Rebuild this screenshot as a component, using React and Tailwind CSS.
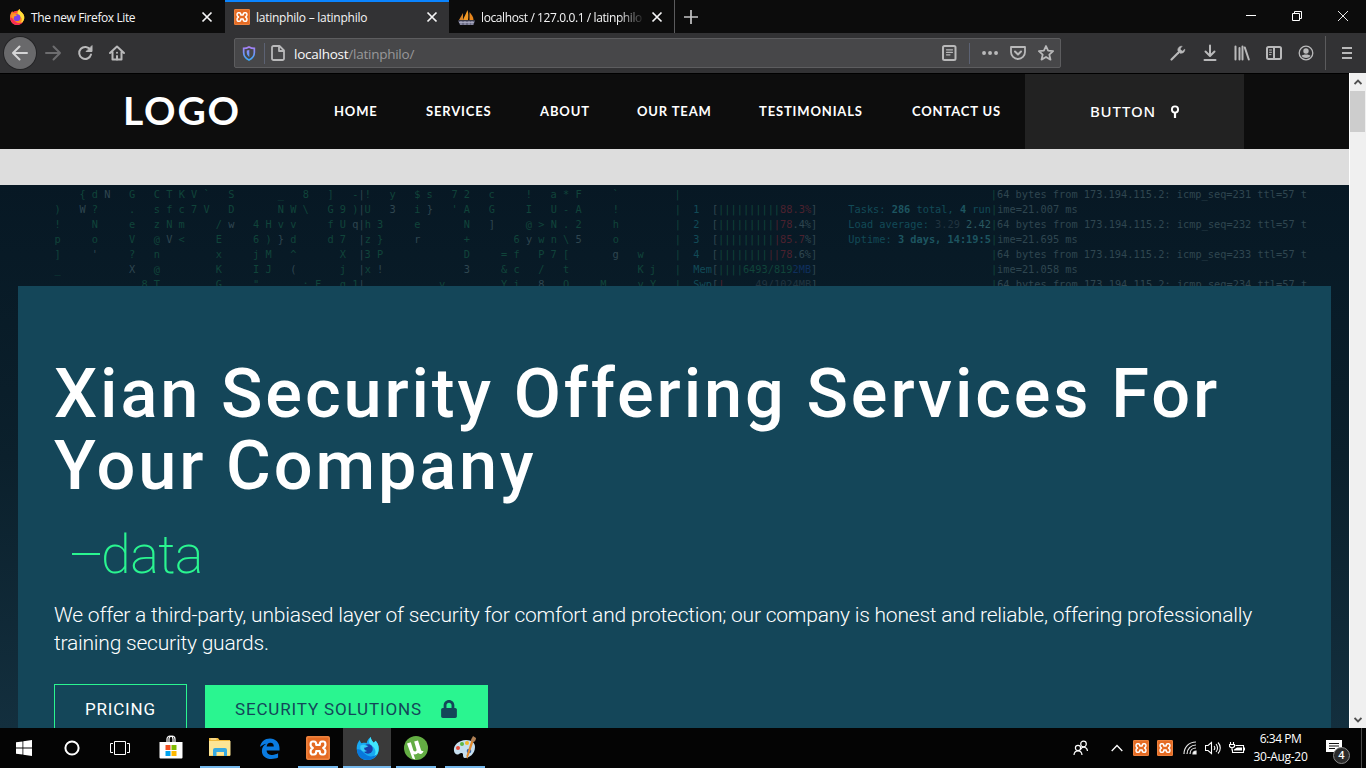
import React from 'react';
import { FaLock } from 'react-icons/fa';

const G = 'text-[#10443a]';
const W = 'text-[#2f4650]';
const C = 'text-[#124a57]';
const B = 'text-[#1d5560] font-bold';
const R = 'text-[#4c212e]';

const PING = (n) => `64 bytes from 173.194.115.2: icmp_seq=${n} ttl=57 t`;

// Each row lists [column, text, colour] runs on a fixed character grid.
const ROWS = [
  [[4, '{ d', G], [8, 'N', W], [12, 'G   C T K V `   S', G], [36, '_   8   ]   -', G], [49, '|', W], [50, '!   y   $ s   7 2   c', G], [76, '!   a * F     `', G], [100, '|', G], [151, '|', G], [152, PING(231), W]],
  [[0, ')', G], [4, 'W', W], [6, '?', G], [12, '.   s f c 7 V   D', G], [36, 'N W \\   G 9 )', G], [49, '|', W], [50, 'U', G], [54, '3', W], [58, 'i', G], [60, '}', W], [64, "' A   G", G], [76, 'I   U - A     !', G], [100, '|', G], [103, '1', C], [106, '[', W], [107, '||||||||||', G], [117, '88.3%', R], [122, ']', W], [128, 'Tasks: ', C], [135, '286', B], [139, 'total, ', C], [146, '4', B], [148, 'run', C], [151, '|', G], [152, 'ime=21.007 ms', W]],
  [[0, '!', G], [6, 'N', G], [12, 'e   z N m     /', G], [28, 'w', W], [32, '4 H v v     f U', G], [48, 'q|', W], [50, 'h 3', G], [58, 'e       N', G], [70, ']', W], [76, '@ > N . 2     h', G], [100, '|', G], [103, '2', C], [106, '[', W], [107, '|||||||||', G], [116, '|78', R], [119, '.4%]', W], [128, 'Load average: ', C], [142, '3.29', 'text-[#20333f]'], [147, '2.42', 'text-[#2b5961]'], [151, '|', G], [152, PING(232), W]],
  [[0, 'p', G], [6, 'o', G], [12, 'V   @', G], [18, 'V', W], [20, '<     E', G], [32, '6 )', G], [36, '}', W], [38, 'd     d 7', G], [49, '|', W], [50, 'z }', G], [58, 'r', W], [66, '+', G], [74, '6', G], [76, 'y', W], [78, 'w n \\', G], [84, '5', W], [90, 'o', G], [100, '|', G], [103, '3', C], [106, '[', W], [107, '|||||||||', G], [116, '|85.7', R], [121, '%]', W], [128, 'Uptime: ', C], [136, '3 days, 14:19:5', B], [151, '|', G], [152, 'ime=21.695 ms', W]],
  [[0, ']', G], [6, "'", W], [12, '?   n', G], [26, 'x     j M   ^', G], [46, 'X', G], [49, '|', W], [50, '3 P', G], [66, 'D     = f   P 7 [', G], [90, 'g', W], [94, 'w', G], [100, '|', G], [103, '4', C], [106, '[', W], [107, '||||||||', G], [115, '||78', R], [119, '.6%]', W], [151, '|', G], [152, PING(233), W]],
  [[0, '_', G], [12, 'X', W], [16, '@', G], [26, 'K     I J', G], [38, '(', W], [46, 'j', G], [49, '|', W], [50, 'x', G], [52, '!', W], [66, '3', W], [72, '& c   /   t', G], [94, 'K j', G], [100, '|', G], [103, 'Mem', C], [106, '[', W], [107, '||||6493/819', G], [119, '2MB', 'text-[#0f2f5c]'], [122, ']', W], [151, '|', G], [152, 'ime=21.058 ms', W]],
  [[0, '.', G], [14, '8 T', G], [26, 'G     "', G], [40, ': F', G], [46, 'q 1', G], [49, '|', W], [62, 'y', G], [72, 'Y i', G], [78, '8', W], [82, 'Q     M', G], [94, 'y Y', G], [100, '|', G], [103, 'Swp', C], [106, '[', W], [107, '|', R], [113, '49/1024MB', 'text-[#20333f]'], [122, ']', W], [151, '|', G], [152, PING(234), W]],
];

function Row({ runs }) {
  let at = 0;
  return (
    <div>
      {runs.map(([col, text, cls], i) => {
        const pad = ' '.repeat(col - at);
        at = col + text.length;
        return <span key={i} className={cls}>{pad}{text}</span>;
      })}
    </div>
  );
}

function Xampp({ className }) {
  return (
    <svg viewBox="0 0 24 24" className={className}>
      <rect width="24" height="24" rx="2" fill="#e56a22" />
      <rect x=".9" y=".9" width="22.200" height="22.200" rx="1" fill="none" stroke="#f39a5c" strokeWidth=".8" />
      <path d="M8 5.500H6.500C4.300 5.500 4.300 9 5 10.200c.3.700 1 1.200 1.800 1.800-.8.600-1.500 1.100-1.800 1.800-.7 1.200-.7 4.700 1.500 4.700H8c1.800 0 2.300-1.500 2.300-3.500h3.400c0 2 .5 3.500 2.300 3.500h1.500c2.200 0 2.200-3.500 1.500-4.700-.3-.7-1-1.200-1.800-1.800.8-.6 1.500-1.100 1.800-1.800.7-1.200.7-4.700-1.500-4.700H16c-1.800 0-2.300 1.500-2.300 3.500h-3.400c0-2-.5-3.500-2.300-3.500z" fill="none" stroke="#fff" strokeWidth="2.200" strokeLinejoin="round" />
    </svg>
  );
}

function Firefox({ className }) {
  return (
    <svg viewBox="0 0 24 24" className={className}>
      <circle cx="12" cy="13" r="10.500" fill="#ff453f" />
      <path d="M2 14C1 9 3 5 5 3c.3 1.700 1 2.800 2 3.500C8 6 9.500 6 11 6.500 12 3 14 1 16 0c0 3 2 4 4 6 3 3 4 7 2 11-2 4.500-6 7-10 7C7 24 3 21 2 14z" fill="#ff8a1f" />
      <path d="M16 0c0 3 2 4 4 6 3 3 4 8 1.500 12-1 2-3 3.500-5 4 3-3 4-7 1-10-2-2-4-3-4.500-5.500C13.300 3.500 14.500 1.200 16 0z" fill="#ffdf3a" />
      <path d="M2 13c0 7 5 11 10 11 4 0 7-1.500 9-5-3 2-8 3-11 0C6 17 5 12 2 13z" fill="#f72d55" />
      <circle cx="12" cy="13" r="5" fill="#7a42e8" />
      <path d="M5 9c3-2 5-.5 7 .5-1 .8-2 1.500-4 1.500 0 2-1 2-1 3C5 13 4 11 5 9z" fill="#ff9b28" />
    </svg>
  );
}

function FirefoxBlue({ className }) {
  return (
    <svg viewBox="0 0 24 24" className={className}>
      <path d="M1 14C0 9 2 5 4 3c.3 1.700 1 2.800 2 3.500C8 6 9.500 6 11 6.500 12 3 13.500 1 15.500 0c0 3 1.500 4 3 6l2-2c3 3 4 8 2.500 13-2 4.500-6 7-11 7C6 24 2 20 1 14z" fill="#18a9f2" />
      <path d="M15.500 0c0 3 1.500 4 3 6l2-2c3 3 4 8 2.500 12-1 3-3 4.500-5 5 3-3 3-7 .5-10-2-2-4.500-3-5-5.500.2-2.500.8-4.400 2-5.500z" fill="#40e4fb" />
      <path d="M1 13c0 7 5 11 11 11 4 0 8-2 10-6-4 3-9 3-12 0C7 16 5 12 1 13z" fill="#0878dc" />
      <circle cx="12.500" cy="12.500" r="5" fill="#1a3fa8" />
      <path d="M4.500 9c3-2 6-.5 8.500.5-1 .8-2 1.700-4.500 1.700 0 2 1 3 3 3.300-3 2-6 0-7-2.500z" fill="#38cdf7" />
    </svg>
  );
}

function Sailboat() {
  return (
    <svg viewBox="0 0 17 17" className="size-[17px]">
      <path d="M1 11L5 4v7z" fill="#d98427" />
      <path d="M5 11C6 8 8 5 9.500 1c1 3 1 7 .5 10z" fill="#f39a24" />
      <path d="M11.500 11V3c2 2.500 4 5 4 8z" fill="#e8861c" />
      <path d="M0 11.500h17l-1.500 4.500H2z" fill="#6b6c85" />
      <path d="M1 13.500h15M3 12v4M7 12v4M11 12v4M14 12v4" stroke="#b0b1c8" strokeWidth=".8" />
    </svg>
  );
}

function Close() {
  return (
    <svg viewBox="0 0 12 12" className="size-3 shrink-0">
      <path d="M1.500 1.500l9 9m0-9l-9 9" stroke="#f5f5f6" strokeWidth="1.700" />
    </svg>
  );
}

function Ico({ children, className = 'w-8' }) {
  return (
    <div className={`flex h-full shrink-0 items-center justify-center ${className}`}>
      <svg viewBox="0 0 16 16" className="size-4 overflow-visible" fill="none" stroke="#b9b9ba" strokeWidth="2" strokeLinecap="round" strokeLinejoin="round">
        {children}
      </svg>
    </div>
  );
}

function Tabs() {
  return (
    <div className="flex h-[33px] shrink-0 bg-[#0c0c0c] text-[12px] text-[#f5f5f6]">
      <div className="flex w-[225px] items-center pt-px pr-3 pl-[9px]">
        <Firefox className="size-4" />
        <span className="mt-px ml-[6px] grow whitespace-nowrap tracking-[-0.4px]">The new Firefox Lite</span>
        <Close />
      </div>
      <div className="flex w-[224px] items-center border-t-2 border-[#0a84ff] bg-[#323234] pr-[11px] pb-px pl-[9px]">
        <Xampp className="size-4" />
        <span className="mt-px ml-[6px] grow whitespace-nowrap tracking-[-0.25px]">latinphilo – latinphilo</span>
        <Close />
      </div>
      <div className="flex w-[226px] items-center border-r border-[#5b5b5d] pt-px pr-[11px] pl-[9px]">
        <Sailboat />
        <span className="mt-px ml-[6px] w-[164px] overflow-hidden whitespace-nowrap tracking-[-0.4px] [mask-image:linear-gradient(to_right,black_84%,transparent)]">localhost / 127.0.0.1 / latinphilo</span>
        <div className="ml-[6px]"><Close /></div>
      </div>
      <div className="flex w-8 items-center justify-center">
        <svg viewBox="0 0 14 14" className="size-[14px]"><path d="M7 0v14M0 7h14" stroke="#c5c5c6" strokeWidth="1.700" /></svg>
      </div>
      <div className="ml-auto flex items-center">
        <svg viewBox="0 0 46 33" className="w-[46px]"><path d="M18 15.500h10" stroke="#fff" /></svg>
        <svg viewBox="0 0 46 33" className="w-[46px]" fill="none" stroke="#fff"><path d="M18.500 13.500h7v7h-7zM20.500 13.500v-2h7v7h-2" /></svg>
        <svg viewBox="0 0 46 33" className="w-[46px]"><path d="M18 11l10 10m0-10l-10 10" stroke="#fff" strokeWidth=".9" /></svg>
      </div>
    </div>
  );
}

function Toolbar() {
  return (
    <div className="flex h-10 shrink-0 items-center bg-[#323234] pl-[4px]">
      <div className="flex size-8 items-center justify-center rounded-full bg-[#69696b] ring-1 ring-[#242426]">
        <svg viewBox="0 0 16 16" className="size-4" fill="none" stroke="#d5d5d6" strokeWidth="2" strokeLinecap="round" strokeLinejoin="round"><path d="M15 8H1m6.500-6.500L1 8l6.500 6.500" /></svg>
      </div>
      <Ico className="ml-px w-8"><path d="M1 8h14M8.500 1.500L15 8l-6.500 6.500" stroke="#6d6d6f" /></Ico>
      <Ico><path d="M13.300 4.800A6 6 0 1 0 14 9.500" /><path d="M15 1v5.500H9.500z" fill="#b9b9ba" strokeWidth="1" /></Ico>
      <Ico><path d="M1 8l7-6.500L15 8M3.500 7v7.500h9V7" /><path d="M8 14.500V11" /><path d="M8 7.700v.1" /></Ico>
      <div className="ml-[101px] flex h-[30px] w-[827px] items-center rounded-[2px] border border-[#5d5d5f] bg-[#474749]">
        <div className="flex w-[28px] justify-center">
          <svg viewBox="0 0 14 16" className="h-[15px] w-[14px]" fill="none">
            <defs><linearGradient id="sh" x1="0" y1="0" x2="0" y2="16" gradientUnits="userSpaceOnUse"><stop stopColor="#b07df5" /><stop offset="1" stopColor="#35acf8" /></linearGradient></defs>
            <path d="M7 1c2 1.200 4 1.500 5.700 1.500v4.500c0 4-2.500 6.500-5.700 8-3.200-1.500-5.700-4-5.700-8V2.500C3 2.500 5 2.200 7 1z" stroke="url(#sh)" strokeWidth="1.800" />
            <path d="M7.300 4.200v7.500c-1.700-1.200-2.700-2.900-2.700-4.700V4.700z" fill="url(#sh)" />
          </svg>
        </div>
        <div className="ml-px h-[21px] w-px bg-[#5c6273]" />
        <Ico className="-ml-px w-[27px]"><path d="M3.500 1h6l4.500 4.500V13.500a1.500 1.500 0 0 1-1.500 1.500h-9A1.500 1.500 0 0 1 2 13.500v-11A1.500 1.500 0 0 1 3.500 1zM9 1v5h5" strokeWidth="1.800" /></Ico>
        <span className="mt-[2px] ml-[3px] grow text-[13.500px] tracking-[-0.25px] text-[#98989a]"><span className="text-[#f9f9fa]">localhost</span>/latinphilo/</span>
        <Ico className="w-[28px]"><rect x="2" y="1" width="12.500" height="14" rx="1.500" /><path d="M5.500 4.800h6M5.500 7.300h6M5.500 9.800h3.500M5.500 4.800h6" strokeWidth="1.200" /></Ico>
        <div className="ml-[6px] h-[21px] w-px bg-[#5c6273]" />
        <Ico className="ml-[6px] w-[28px]"><path d="M2 8h.1M8 8h.1M14 8h.1" strokeWidth="3.800" /></Ico>
        <Ico className="w-[28px]"><path d="M1 2h14v5a7 7 0 0 1-14 0z" strokeWidth="1.800" /><path d="M5 6.500l3 3 3-3" /></Ico>
        <Ico className="w-[28px]"><path d="M8 1l2.100 4.700 5 .5-3.800 3.400 1.200 5L8 12l-4.500 2.600 1.200-5L.9 6.200l5-.5z" strokeWidth="1.800" /></Ico>
      </div>
      <div className="ml-auto flex h-full items-center">
        <Ico><path d="M1.500 14.500L8.500 7.500" strokeWidth="2.200" /><path d="M11.800 1.200C9.300 1 7.300 3.300 8 6l2 2.200c3 .5 5-1.500 4.800-4l-2.500 2-2.200-2z" fill="#b9b9ba" strokeWidth=".6" /></Ico>
        <Ico><path d="M8 .5v10M3.500 6.500L8 11l4.500-4.500M2.500 15h11" /></Ico>
        <Ico><path d="M1.500 1.500v13M5.500 3v11.500M8.500 1.500v13M10.800 2.500l4 12" /></Ico>
        <Ico><rect x="1" y="2" width="14" height="12" rx="1.500" /><path d="M8 2v12" /><path d="M3.500 5h2M3.500 7.300h2M3.500 9.600h1.500" strokeWidth="1" /></Ico>
        <Ico><circle cx="8" cy="8" r="6.800" strokeWidth="1.300" /><circle cx="8" cy="6" r="2.700" fill="#b9b9ba" stroke="none" /><path d="M3.500 11c1-2 8-2 9 0-2 2.600-7 2.600-9 0z" fill="#b9b9ba" stroke="none" /></Ico>
        <div className="ml-[3px] h-[34px] w-px bg-[#5b5b5d]" />
        <Ico className="mr-px ml-[3px] w-[36px]"><path d="M3 3h10M3 8h10M3 13h10" strokeLinecap="butt" /></Ico>
      </div>
    </div>
  );
}

function Nav() {
  return (
    <nav className="flex h-[76px] shrink-0 items-stretch border-t border-black bg-[#0d0d0d] text-white [font-family:Lato,sans-serif]">
      <div className="ml-[123px] flex w-[211px] items-center pb-[3px] text-[39px] font-bold tracking-[1.8px]">LOGO</div>
      <div className="flex items-center text-[13px] font-bold whitespace-nowrap tracking-[0.85px]">
        <span className="w-[92px]">HOME</span>
        <span className="w-[114px]">SERVICES</span>
        <span className="w-[97px]">ABOUT</span>
        <span className="w-[122px]">OUR TEAM</span>
        <span className="w-[153px]">TESTIMONIALS</span>
        <span className="w-[113px]">CONTACT US</span>
      </div>
      <div className="flex w-[219px] items-center bg-[#222] pl-[65px] text-[15px] font-medium tracking-[0.8px] [font-family:'Noto_Sans',sans-serif]">
        <span className="w-[80px]">BUTTON</span>
        <svg viewBox="0 0 10 14" className="h-[14px] w-[10px]" fill="none" stroke="#fff" strokeWidth="1.900"><circle cx="5" cy="4.500" r="3.100" /><path d="M5 7.500V13" strokeWidth="2.200" /></svg>
      </div>
    </nav>
  );
}

function Hero() {
  return (
    <section className="h-[543px] overflow-hidden bg-linear-to-b from-[#071824] via-[#0b202c] to-[#132f3e]">
      <div className="h-[101px] overflow-hidden pt-[2px] pl-[54.6px] text-[10.300px] leading-[15px] whitespace-pre [font-family:'DejaVu_Sans_Mono',monospace]">
        {ROWS.map((r, i) => <Row key={i} runs={r} />)}
      </div>
      <div className="mx-[18px] h-[442px] bg-[#144659] px-9 pt-[72px] text-white">
        <h1 className="text-[68.500px] leading-[72px] font-medium tracking-[2.850px] whitespace-nowrap [font-family:Roboto,sans-serif]">
          Xian Security Offering Services For<br />Your Company
        </h1>
        <div className="mt-[20px] flex h-[62px] items-center pl-[18px] text-[54px] font-extralight tracking-[-0.6px] whitespace-nowrap text-[#2af590] [font-family:Roboto,sans-serif]">
          <span className="mt-px mr-[1px] h-[2px] w-7 bg-[#2af590]" /><span className="pt-[2px]">data</span>
        </div>
        <p className="mt-[17px] text-[21px] leading-[28px] font-light tracking-[-0.215px] whitespace-nowrap [font-family:Roboto,sans-serif]">
          We offer a third-party, unbiased layer of security for comfort and protection; our company is honest and reliable, offering professionally<br />training security guards.
        </p>
        <div className="mt-[27px] flex gap-[18px] text-[17px] whitespace-nowrap [font-family:Roboto,sans-serif]">
          <div className="h-[54px] w-[133px] border border-[#2af590] pt-[12px] pl-[30px] tracking-[0.8px]">PRICING</div>
          <div className="mt-px flex h-[54px] w-[283px] items-start bg-[#2af590] pt-[12px] pl-[30px] tracking-[0.850px] text-[#144659]">
            <span className="w-[206px]">SECURITY SOLUTIONS</span>
            <FaLock className="mt-[3px] h-[18px] w-4" />
          </div>
        </div>
      </div>
    </section>
  );
}

function Scrollbar() {
  return (
    <div className="flex w-[17px] shrink-0 flex-col border-l border-white bg-[#f0f0f0]">
      <div className="flex h-[18px] items-center justify-center"><svg viewBox="0 0 8 6" className="h-[6px] w-2"><path d="M.5 5L4 1.500 7.500 5" fill="none" stroke="#505050" strokeWidth="1.900" /></svg></div>
      <div className="mr-px h-[41px] bg-[#cdcdcd]" />
      <div className="mt-auto flex h-[17px] items-center justify-center"><svg viewBox="0 0 8 6" className="h-[6px] w-2"><path d="M.5 1L4 4.500 7.500 1" fill="none" stroke="#505050" strokeWidth="1.900" /></svg></div>
    </div>
  );
}

function Task({ children, open, active }) {
  return (
    <div className={`flex h-10 w-12 flex-col items-center ${active ? 'bg-[#3a3a3a]' : ''}`}>
      <div className="flex h-[38px] items-center justify-center pt-[2px]">{children}</div>
      {open && <div className={`h-[2px] bg-[#76b9ed] ${active ? 'w-12' : 'w-10'}`} />}
    </div>
  );
}

function Taskbar() {
  return (
    <div className="flex h-10 shrink-0 bg-[#040404] text-white">
      <Task><svg viewBox="0 0 16 16" className="size-4" fill="#fff"><path d="M0 2.300l6.500-.9v6.200H0zM7.300 1.300L16 0v7.600H7.300zM0 8.400h6.500v6.200L0 13.700zM7.300 8.400H16V16l-8.700-1.300z" /></svg></Task>
      <Task><svg viewBox="0 0 16 16" className="size-4"><circle cx="8" cy="8" r="6.600" fill="none" stroke="#fff" strokeWidth="2" /></svg></Task>
      <Task><svg viewBox="0 0 20 16" className="h-4 w-5" fill="none" stroke="#fff"><path d="M4.500 1.500h11v13h-11zM3 3.500H.5v9H3M17 3.500h2.500v9H17" /></svg></Task>
      <div className="ml-[3px] flex gap-px">
        <Task>
          <svg viewBox="0 0 24 24" className="-mt-[2px] -ml-px size-6"><path d="M8 7V4a3 3 0 0 1 6 0v3M10 7V4a3 3 0 0 1 6 0v3" fill="none" stroke="#fff" strokeWidth="1.200" /><path d="M.5 7h23v15.500a1 1 0 0 1-1 1h-21a1 1 0 0 1-1-1z" fill="#fff" /><path d="M6.500 10h5v5h-5z" fill="#f25022" /><path d="M12.500 10h5v5h-5z" fill="#7fba00" /><path d="M6.500 16h5v5h-5z" fill="#00a4ef" /><path d="M12.500 16h5v5h-5z" fill="#ffb900" /></svg>
        </Task>
        <Task open>
          <svg viewBox="0 0 22 18" className="-mt-[2px] h-[18px] w-[22px]"><path d="M0 0h9l1.500 2H21v16H0z" fill="#f0b93a" /><path d="M0 3h21.500v14.500H0z" fill="#fde595" /><path d="M4 18v-6a2 2 0 0 1 2-2h10a2 2 0 0 1 2 2v6h-3v-4H7.500v4z" fill="#36a9e1" /><path d="M1.500 1h6" stroke="#fff6cf" /></svg>
        </Task>
        <Task>
          <svg viewBox="0 0 22 22" className="size-[21px]"><path d="M1 9.500C2 4 6 .5 11.500.5 17.500.5 21.500 5 21.500 10.500V13H8c.2 3.500 3 4.700 6 4.700 2.300 0 4.300-.6 6-1.600v4.400c-2 1-4.300 1.500-7 1.500-6 0-10-3.500-10-8.500 0-3.500 2-6 4.700-7.500C4.500 6.700 2.500 8 1 9.500zM8 9h7.500c0-2.500-1-4-3.500-4S8.400 6.700 8 9z" fill="#0a7be0" /></svg>
        </Task>
        <Task open><Xampp className="size-6" /></Task>
        <Task open active><FirefoxBlue className="size-[23px]" /></Task>
        <Task open>
          <svg viewBox="0 0 24 24" className="size-6"><circle cx="12" cy="12" r="12" fill="#63ad43" /><path d="M3 7.500l3.800-1.200 2.500 8c.5 1.700 3.700 1.600 3.200-.7L10.200 5.500 14 4.500l3 9.500c.3 1 1.300 1.300 2.500 1-.2 1.500-1.600 3-3 3-1.200 0-2-.5-2.500-1.200-.8 1.300-3 2-4.500 1.300l1.800 5.400-2.800-1z" fill="#fff" /></svg>
        </Task>
        <Task open>
          <svg viewBox="0 0 24 24" className="size-6"><path d="M1 15C0 9 6 4 13 4c6 0 9 3 9 7 0 7-6 11-10 11-2 0-2-2-2-3.500S8 16.500 6 18s-4.500 0-5-3z" fill="#c6dfef" /><circle cx="5" cy="12" r="2" fill="#e84d3c" /><circle cx="9" cy="8" r="2" fill="#5bb846" /><circle cx="14" cy="7" r="2" fill="#f2b928" /><circle cx="16" cy="15" r="2.300" fill="#2b62b5" /><path d="M21 4L15.500 20l-1.500 3-.5-3.500L18.500 4z" fill="#e28a2e" /><path d="M18 5c-.5-2 1.500-3 2-5l3 2c0 2-1 3-2 4z" fill="#b08055" /></svg>
        </Task>
      </div>
      <div className="ml-auto flex items-center">
        <div className="flex w-9 justify-center"><svg viewBox="0 0 16 16" className="size-4" fill="none" stroke="#fff" strokeWidth="1.200"><circle cx="10.500" cy="4" r="2.800" /><path d="M7.500 9.500c1.500-3.500 6.500-3 7 1.500" /><circle cx="5" cy="8" r="2.600" /><path d="M1 15c.3-5.500 7.700-5.500 8 0" /></svg></div>
        <div className="flex w-9 justify-center"><svg viewBox="0 0 12 8" className="h-2 w-3"><path d="M.7 7L6 1.500 11.300 7" fill="none" stroke="#fff" strokeWidth="1.300" /></svg></div>
        <div className="-ml-[6px] flex w-6 justify-center"><Xampp className="size-4" /></div>
        <div className="flex w-6 justify-center"><Xampp className="size-4" /></div>
        <div className="flex w-[25px] justify-center pl-px"><svg viewBox="0 0 14 14" className="size-[14px]" fill="none" stroke="#e8e8e8" strokeWidth="1.200"><path d="M1 13C1 6 6 1 13 1M4 13c0-5 4-9 9-9M7 13c0-3.500 2.500-6 6-6" /><path d="M10 13c0-1.500 1-3 3-3v3z" fill="#fff" /></svg></div>
        <div className="flex w-[22px] justify-center"><svg viewBox="0 0 16 14" className="h-[14px] w-4" fill="none" stroke="#fff" strokeWidth="1.100"><path d="M.5 4.500H3l3.500-3v11l-3.500-3H.5zM9 5c1 1.200 1 2.800 0 4M11 3c2 2.200 2 5.800 0 8M13 1.500c3 3 3 8 0 11" /></svg></div>
        <div className="flex w-[25px] justify-center"><svg viewBox="0 0 16 12" className="h-3 w-4" fill="none" stroke="#fff" strokeWidth="1.100"><path d="M6.500 3.500h8v7h-11v-3" /><path d="M15.500 5.500v3" /><path d="M8 5.500h5v3H5v-1z" fill="#fff" stroke="none" /><path d="M1.500 0v2M4.500 0v2M.5 2.500h5v2c-1.500 1.500-3.500 1.500-5 0zM3 5.500v3" /></svg></div>
        <div className="flex w-[63px] flex-col items-center text-[12px] leading-[18px] tracking-[-0.300px] whitespace-nowrap"><span className="tracking-[-0.450px]">6:34 PM</span><span>30-Aug-20</span></div>
        <div className="relative ml-[13px] h-8 w-[36px]">
          <svg viewBox="0 0 16 15" className="mt-2 ml-px h-[15px] w-4"><path d="M0 0h16v12h-5l-3 3v-3H0z" fill="#fff" /><path d="M3 3.500h10M3 6h10M3 8.500h6" stroke="#111" /></svg>
          <span className="absolute top-[15px] left-[8px] flex size-[17px] items-center justify-center rounded-full border border-[#8a8a8a] bg-[#2b2b2b] text-[11px] font-semibold">4</span>
        </div>
        <div className="h-10 w-px bg-[#4a4a4a]" />
        <div className="w-1" />
      </div>
    </div>
  );
}

export default function App() {
  return (
    <div className="flex h-[768px] w-[1366px] flex-col overflow-hidden bg-black [font-family:'Open_Sans','Noto_Sans',sans-serif]">
      <Tabs />
      <Toolbar />
      <div className="flex h-[655px] shrink-0">
        <main className="flex w-[1349px] flex-col">
          <Nav />
          <div className="h-9 shrink-0 bg-[#ddd]" />
          <Hero />
        </main>
        <Scrollbar />
      </div>
      <Taskbar />
    </div>
  );
}
